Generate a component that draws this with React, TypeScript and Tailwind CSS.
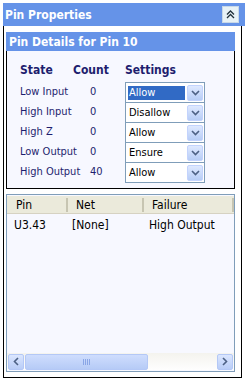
import React from 'react';

const rows = [
  { state: 'Low Input', count: '0', setting: 'Allow', selected: true },
  { state: 'High Input', count: '0', setting: 'Disallow' },
  { state: 'High Z', count: '0', setting: 'Allow' },
  { state: 'Low Output', count: '0', setting: 'Ensure' },
  { state: 'High Output', count: '40', setting: 'Allow' },
];

const font = { fontFamily: '"DejaVu Sans Condensed", "DejaVu Sans", Tahoma, sans-serif' };

const ChevronDown = () => (
  <svg width="9" height="6" viewBox="0 0 9 6">
    <path d="M1 1l3.5 3.5L8 1" fill="none" stroke="#4d6185" strokeWidth="1.6" />
  </svg>
);

const Select = ({ value, selected }: { value: string; selected?: boolean }) => (
  <div className="flex h-[21px] w-[80px] items-center border border-[#7f9db9] bg-white -mt-px first:mt-0">
    <div className="flex flex-1 items-center pl-[2px]">
      <span
        className={
          selected
            ? 'bg-[#316ac5] text-white w-[57px] h-[14px] leading-[14px] px-px'
            : 'text-black h-[14px] leading-[14px] px-px'
        }
      >
        {value}
      </span>
    </div>
    <div className="flex h-[16px] w-[16px] mr-px items-center justify-center rounded-[2px] bg-gradient-to-b from-[#dfe9ff] to-[#b7cdf6] border border-[#c3d3fd]">
      <ChevronDown />
    </div>
  </div>
);

const ScrollArrow = ({ dir }: { dir: 'left' | 'right' }) => (
  <div className="flex h-[16px] w-[16px] items-center justify-center rounded-[2px] border border-[#b4c8f6] bg-gradient-to-b from-[#dbe6fe] to-[#b9cdf7]">
    <svg width="6" height="9" viewBox="0 0 6 9">
      <path
        d={dir === 'left' ? 'M5 1L1.5 4.5L5 8' : 'M1 1l3.5 3.5L1 8'}
        fill="none"
        stroke="#4d6185"
        strokeWidth="1.6"
      />
    </svg>
  </div>
);

export default function App() {
  return (
    <div className="w-[245px] h-[381px] bg-white flex flex-col text-[11px] pt-[3px]" style={font}>
      <div className="h-[23px] ml-[3px] bg-[#6593e8] flex items-center justify-between pl-[2px] pr-[6px]">
        <span className="text-white font-bold text-[12px]">Pin Properties</span>
        <div className="w-[17px] h-[17px] bg-[#e8f2f6] border border-[#c8d8e8] flex items-center justify-center">
          <svg width="9" height="9" viewBox="0 0 9 9">
            <path d="M1 4.5L4.5 1L8 4.5M1 8L4.5 4.5L8 8" fill="none" stroke="#21313b" strokeWidth="1.3" />
          </svg>
        </div>
      </div>

      <div className="flex-1 mx-[3px] mb-[3px] border-x border-b border-black px-[2px] pt-[6px] flex flex-col">
        <div className="border border-black border-t-0 mr-[4px]">
          <div className="h-[19px] bg-[#6593e8] flex items-center pl-[3px] -mx-px">
            <span className="text-white font-bold text-[12px]">Pin Details for Pin 10</span>
          </div>
          <div className="bg-[#f7f8ff] pt-[10px] pb-[5px] pl-[13px] text-[#1e1e6e]">
            <div className="flex font-bold text-[12px] h-[18px] leading-[18px]">
              <span className="w-[53px]">State</span>
              <span className="w-[52px]">Count</span>
              <span>Settings</span>
            </div>
            <div className="flex mt-[3px]">
              <div className="flex flex-col">
                {rows.map((r) => (
                  <div key={r.state} className="flex h-[21px] items-center -mt-px first:mt-0">
                    <span className="w-[70px]">{r.state}</span>
                    <span className="w-[35px]">{r.count}</span>
                  </div>
                ))}
              </div>
              <div className="flex flex-col">
                {rows.map((r) => (
                  <Select key={r.state} value={r.setting} selected={r.selected} />
                ))}
              </div>
            </div>
          </div>
        </div>

        <div className="mt-[5px] mb-[5px] mr-[4px] flex-1 border border-[#7f9db9] bg-[#f7f8ff] flex flex-col pt-px text-[12px]">
          <div className="h-[18px] bg-[#ebeadb] flex items-center text-black border-b border-[#d6d2c2]">
            <div className="w-[61px] pl-[9px] border-r-2 border-[#c7c5b2] h-[14px] leading-[14px]">Pin</div>
            <div className="w-[76px] pl-[8px] border-r-2 border-[#c7c5b2] h-[14px] leading-[14px]">Net</div>
            <div className="flex-1 pl-[8px] border-r-2 border-[#c7c5b2] h-[14px] leading-[14px]">Failure</div>
          </div>
          <div className="flex text-black h-[21px] items-center">
            <div className="w-[61px] pl-[7px]">U3.43</div>
            <div className="w-[76px] pl-[4px]">[None]</div>
            <div className="flex-1 pl-[5px]">High Output</div>
          </div>
          <div className="flex-1" />
          <div className="h-[17px] bg-gradient-to-b from-[#f4f3ee] to-[#fefefe] flex items-center px-px mb-[1px]">
            <ScrollArrow dir="left" />
            <div className="ml-px w-[123px] h-[16px] rounded-[2px] border border-[#b4c8f6] bg-gradient-to-b from-[#cfddfd] to-[#b6cbf6] flex items-center justify-center">
              <span className="flex gap-px">
                <i className="block w-px h-[6px] bg-[#8aa6e6]" />
                <i className="block w-px h-[6px] bg-[#8aa6e6]" />
                <i className="block w-px h-[6px] bg-[#8aa6e6]" />
                <i className="block w-px h-[6px] bg-[#8aa6e6]" />
              </span>
            </div>
            <div className="flex-1" />
            <ScrollArrow dir="right" />
          </div>
        </div>
      </div>
    </div>
  );
}
